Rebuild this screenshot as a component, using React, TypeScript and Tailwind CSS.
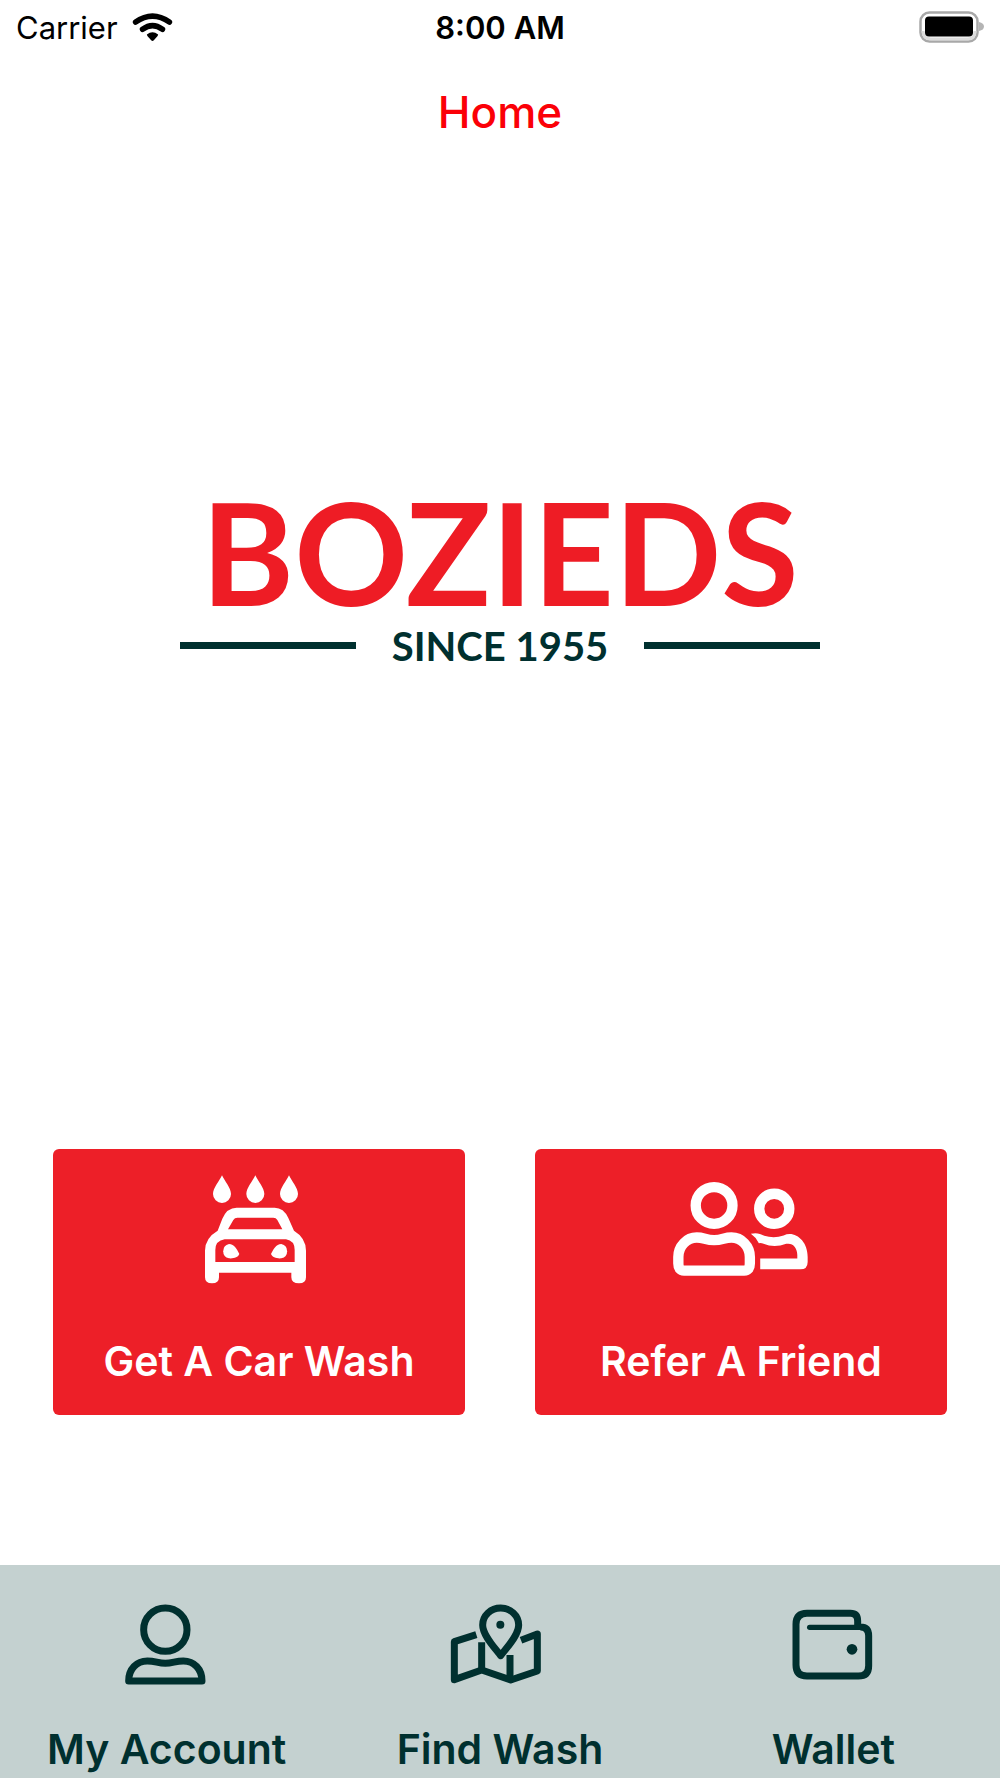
import React from 'react';

const WifiIcon: React.FC = () => (
  <svg viewBox="396 36 124 90" className="w-[41px] h-[30px]" fill="none" stroke="currentColor" strokeLinecap="round" aria-hidden="true">
    <path strokeWidth={17} d="M407 66Q458 30 509 66" />
    <path strokeWidth={17} d="M428 88Q458 66 488 88" />
    <path fill="currentColor" stroke="none" d="M441 104Q458 90 475 104Q476 107 462 121Q458 125 454 121Q440 107 441 104Z" />
  </svg>
);

const BatteryIcon: React.FC = () => (
  <svg viewBox="0 0 65 32" className="w-[65px] h-8" fill="none" aria-hidden="true">
    <rect x="1.5" y="1.5" width="57" height="29" rx="9" stroke="#a8a8a8" strokeWidth="2.5" />
    <path d="M4 20Q4 28 12 28H49Q56 28 56 20" stroke="#dcdcdc" strokeWidth="3" />
    <rect x="6" y="5.500" width="48" height="20" rx="4" fill="#000" />
    <path d="M60 11Q65 12 65 15.500Q65 19 60 20Z" fill="#b4b4b4" />
  </svg>
);

const CarWashIcon: React.FC = () => (
  <svg viewBox="72 40 330 333" className="w-[110px] h-[111px]" fill="currentColor" aria-hidden="true">
    <path d="M126 44C134 62 153 82 153 100A27 27 0 0 1 99 100C99 82 118 62 126 44Z" />
    <path d="M226 44C234 62 253 82 253 100A27 27 0 0 1 199 100C199 82 218 62 226 44Z" />
    <path d="M327 44C335 62 354 82 354 100A27 27 0 0 1 300 100C300 82 319 62 327 44Z" />
    <path
      fillRule="evenodd"
      d="M113 210L127 174Q141 141 170 141H284Q311 141 325 172L342 210Q378 232 378 270V350Q378 368 357 368Q334 368 334 350V336H117V350Q117 368 96 368Q75 368 75 350V270Q75 232 113 210ZM144 206H307L292 178Q288 171 280 171H172Q164 171 160 178ZM134 236Q106 240 106 268V304H344V268Q344 240 318 236Z"
    />
    <path d="M147 250C163 250 172 268 178 280C174 290 162 294 147 293A22 22 0 0 1 147 250Z" />
    <path d="M304 250C288 250 279 268 273 280C277 290 289 294 304 293A22 22 0 0 0 304 250Z" />
  </svg>
);

const FriendsIcon: React.FC = () => (
  <svg viewBox="67 63 410 290" className="w-[137px] h-[97px]" fill="none" stroke="currentColor" strokeWidth={31} aria-hidden="true">
    <circle cx="190" cy="136" r="55" />
    <circle cx="370" cy="146" r="45" />
    <path d="M100 331Q83 331 83 310V290C83 258 108 232 138 232C160 232 165 240 190 240C215 240 220 232 242 232C272 232 297 258 297 290V310Q297 331 280 331Z" />
    <path d="M300 221C318 217 328 221 340 227Q370 236 398 226C430 210 470 240 470 290V305Q470 327 448 327H328V295H439V285C439 262 425 247 406 251Q370 264 338 251Q332 248 324 249Q316 232 300 221Z" fill="currentColor" stroke="none" />
  </svg>
);

const AccountIcon: React.FC = () => (
  <svg viewBox="375 163 249 243" className="w-[83px] h-[81px]" fill="none" stroke="currentColor" strokeWidth={21} aria-hidden="true">
    <circle cx="496" cy="240" r="65" />
    <path strokeLinejoin="round" d="M386 394C386 358 410 334 442 334C466 334 474 341 496 341C518 341 526 334 550 334C582 334 606 358 606 394Z" />
  </svg>
);

const MapIcon: React.FC = () => (
  <svg viewBox="210 163 300 243" className="w-[100px] h-[81px]" fill="none" stroke="currentColor" strokeWidth={21} strokeLinejoin="round" aria-hidden="true">
    <path d="M289 255L223 276V390L305 361L392 391L472 364V253L423 272" />
    <path d="M305 278V362M390 316V388" />
    <path d="M362 318C346 296 308 258 308 226A54 51 0 0 1 416 226C416 258 378 296 362 318Z" />
    <circle cx="361" cy="225" r="12" fill="currentColor" stroke="none" />
  </svg>
);

const WalletIcon: React.FC = () => (
  <svg viewBox="155 178 249 213" className="w-[83px] h-[71px]" fill="none" stroke="currentColor" strokeWidth={21} aria-hidden="true">
    <path d="M352 232V214Q352 191 330 191H200Q167 191 167 224V346Q167 379 200 379H354Q385 379 385 348V258Q385 232 360 232" />
    <path strokeWidth={16} strokeLinecap="round" d="M208 233H362" />
    <circle cx="335" cy="299" r="16" fill="currentColor" stroke="none" />
  </svg>
);

const actions = [
  { label: 'Get A Car Wash', Icon: CarWashIcon },
  { label: 'Refer A Friend', Icon: FriendsIcon },
];

const tabs = [
  { label: 'My Account', Icon: AccountIcon },
  { label: 'Find Wash', Icon: MapIcon },
  { label: 'Wallet', Icon: WalletIcon },
];

const StatusBar: React.FC = () => (
  <div className="grid grid-cols-3 items-center h-[54px] px-4 text-[31px] leading-none text-black">
    <div className="flex items-center gap-[14px]">
      <span>Carrier</span>
      <WifiIcon />
    </div>
    <span className="text-center font-semibold">8:00 AM</span>
    <div className="flex justify-end">
      <BatteryIcon />
    </div>
  </div>
);

const Logo: React.FC = () => (
  <div className="w-[640px] flex flex-col items-center gap-4 font-['Lato',sans-serif] font-bold">
    <div className="text-[141px] leading-[116px] text-[#ee1c25]">BOZIEDS</div>
    <div className="flex items-center justify-between w-full text-[#00302f]">
      <span className="w-44 h-[7px] bg-current" />
      <span className="text-[40px] leading-[40px]">SINCE 1955</span>
      <span className="w-44 h-[7px] bg-current" />
    </div>
  </div>
);

const App: React.FC = () => {
  return (
    <div className="min-h-screen flex flex-col bg-white font-['Inter',sans-serif]">
      <StatusBar />
      <header className="h-[116px] flex items-center justify-center">
        <h1 className="text-[44px] leading-none font-medium text-[#fb0007]">Home</h1>
      </header>

      <main className="flex-1 flex flex-col">
        <div className="flex-1 flex items-center justify-center pb-40">
          <Logo />
        </div>
        <div className="grid grid-cols-2 gap-[70px] px-[53px] pb-[150px]">
          {actions.map(({ label, Icon }) => (
            <button key={label} type="button" className="h-[266px] pt-6 flex flex-col items-center gap-12 rounded-md bg-[#ed1f28] text-white">
              <span className="h-28 flex items-center">
                <Icon />
              </span>
              <span className="text-[41px] leading-[56px] font-semibold">{label}</span>
            </button>
          ))}
        </div>
      </main>

      <nav className="grid grid-cols-3 h-[213px] bg-[#c4d1d0] text-[#00302f]">
        {tabs.map(({ label, Icon }) => (
          <a key={label} href="#" className="pt-[38px] flex flex-col items-center gap-9">
            <span className="h-[82px] flex items-center">
              <Icon />
            </span>
            <span className="text-[41px] leading-[56px] font-semibold">{label}</span>
          </a>
        ))}
      </nav>
    </div>
  );
};

export default App;
